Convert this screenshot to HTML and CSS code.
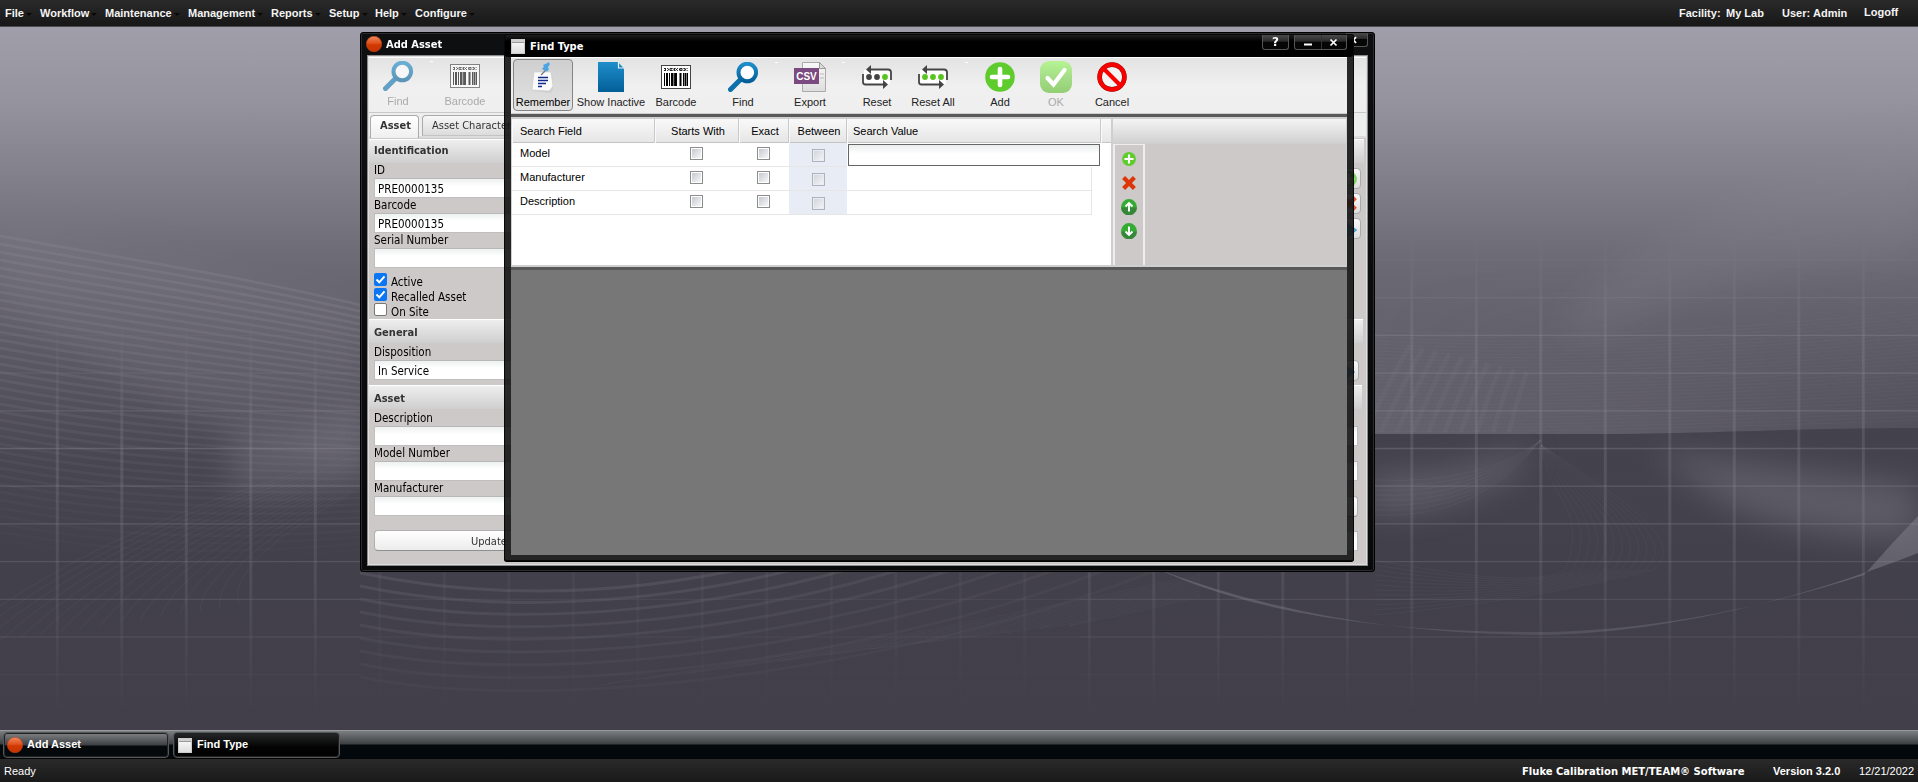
FILE: index.html
```html
<!DOCTYPE html>
<html lang="en">
<head>
<meta charset="utf-8">
<title>MET/TEAM</title>
<link rel="stylesheet" href="styles.css">
</head>
<body>
<svg class="defs" width="0" height="0" aria-hidden="true">
  <defs>
    <linearGradient id="gBlue" x1="0" y1="0" x2="0" y2="1"><stop offset="0" stop-color="#1f8ecb"/><stop offset="1" stop-color="#035f98"/></linearGradient>
    <linearGradient id="gRed" x1="0" y1="0" x2="0" y2="1"><stop offset="0" stop-color="#ef8a5c"/><stop offset=".45" stop-color="#e0501c"/><stop offset=".55" stop-color="#d23a02"/><stop offset="1" stop-color="#c63300"/></linearGradient>
    <linearGradient id="gOk" x1="0" y1="0" x2="0" y2="1"><stop offset="0" stop-color="#b6f592"/><stop offset=".5" stop-color="#a5dd88"/><stop offset="1" stop-color="#93cf74"/></linearGradient>
    <linearGradient id="gPage" x1="0" y1="0" x2="0" y2="1"><stop offset="0" stop-color="#f8f8f8"/><stop offset="1" stop-color="#dedede"/></linearGradient>
  </defs>
  <symbol id="find" viewBox="0 0 30 30"><path d="M2.500 27.500 13 17" stroke="#0c70ab" stroke-width="5" stroke-linecap="round"/><circle cx="19.300" cy="10.500" r="8.800" fill="#fff" stroke="url(#gBlue)" stroke-width="4"/></symbol>
  <symbol id="barcode" viewBox="0 0 30 24"><rect x=".5" y=".5" width="29" height="23" fill="#fff" stroke="#444"/><path d="M3 3.500h24M3 5.500h24" stroke="#222" stroke-width="1" stroke-dasharray="2 1.200 1 1.500 3 1"/><path d="M4 4.500h22" stroke="#222" stroke-dasharray="1 2 1.500 1"/><path d="M3.500 8v13M8.500 8v13M22.500 8v13M26.500 8v13" stroke="#000"/><path d="M6 8v13M11 8v13M15 8v13M19.500 8v13M24.500 8v13" stroke="#000" stroke-width="2"/><path d="M13.200 8v13" stroke="#000" stroke-width="1.400"/></symbol>
  <symbol id="addc" viewBox="0 0 30 30"><circle cx="15" cy="15" r="14.800" fill="#5fcc2e"/><path d="M15 7v16M7 15h16" stroke="#fff" stroke-width="4.600" stroke-linecap="round"/></symbol>
  <symbol id="reset" viewBox="0 0 30 26"><rect x="2" y="6" width="26" height="14" fill="#fff"/><path d="M7 5.500H26q3 0 3 3V16M1 10v8Q1 20.500 3.500 20.500H22" fill="none" stroke="#454545" stroke-width="1.800"/><path d="M4 5.500 9 1v9zM26 20.500 21 16v9z" fill="#454545"/></symbol>
  <symbol id="xmark" viewBox="0 0 14 14"><path d="M1.600 1.600l10.800 10.800M12.400 1.600l-10.800 10.800" stroke="#de3506" stroke-width="4.200"/></symbol>
  <symbol id="disc" viewBox="0 0 16 16"><circle cx="8" cy="8" r="7.900" fill="#35ab34"/><path d="M.1 8.500a7.900 7.900 0 0 0 15.800 0z" fill="#36873a"/></symbol>
  <symbol id="ball" viewBox="0 0 16 16"><circle cx="8" cy="8" r="7.700" fill="url(#gRed)" stroke="#b8441a" stroke-width=".6"/></symbol>
  <symbol id="goto" viewBox="0 0 16 16"><path d="M1 1v10h6" fill="none" stroke="#333" stroke-width="1.500"/><path d="M7 3.500v3H3.500v5H7v3.500L14.500 9z" fill="#35a7d8" stroke="#2482ad"/></symbol>
</svg>

<header class="menubar">
  <nav class="menus">
    <span class="menu">File</span><span class="menu">Workflow</span><span class="menu">Maintenance</span><span class="menu">Management</span><span class="menu">Reports</span><span class="menu">Setup</span><span class="menu">Help</span><span class="menu">Configure</span>
  </nav>
  <div class="session"><span class="facility">Facility:</span><span class="lab">My Lab</span><span class="user">User:</span><span class="admin">Admin</span><span class="logoff">Logoff</span></div>
</header>

<main class="desktop">
  <svg class="wallpaper" width="1918" height="703" viewBox="0 27 1918 703">
    <defs>
      <linearGradient id="sky" x1="0" y1="0" x2="0" y2="1">
        <stop offset="0" stop-color="#a09ea8"/><stop offset=".1" stop-color="#96949e"/><stop offset=".2" stop-color="#84828c"/><stop offset=".32" stop-color="#6e6c77"/><stop offset=".46" stop-color="#5b5964"/><stop offset=".62" stop-color="#484650"/><stop offset=".75" stop-color="#42404a"/><stop offset="1" stop-color="#423f4a"/>
      </linearGradient>
      <linearGradient id="gridFade" x1="0" y1="0" x2="0" y2="1"><stop offset=".28" stop-color="#000"/><stop offset=".45" stop-color="#fff"/><stop offset=".72" stop-color="#ddd"/><stop offset=".98" stop-color="#000"/></linearGradient>
      <linearGradient id="gridFadeLeft" x1="0" y1="0" x2="0" y2="1"><stop offset=".4" stop-color="#000"/><stop offset=".6" stop-color="#fff"/><stop offset=".8" stop-color="#aaa"/><stop offset=".98" stop-color="#000"/></linearGradient>
      <mask id="mGrid" maskUnits="userSpaceOnUse" x="0" y="27" width="1918" height="703"><rect x="1080" y="27" width="838" height="703" fill="url(#gridFade)"/><rect y="27" width="360" height="703" fill="url(#gridFadeLeft)"/><rect x="360" y="27" width="720" height="703" fill="url(#gridFadeLeft)" opacity=".45"/></mask>
      <linearGradient id="ridge" x1="0" y1="0" x2="0" y2="1"><stop offset="0" stop-color="#7b7983" stop-opacity="0"/><stop offset="1" stop-color="#7b7983" stop-opacity=".5"/></linearGradient>
      <linearGradient id="ridgeRight" x1="0" y1="0" x2="1" y2="0"><stop offset="0" stop-color="#fff"/><stop offset=".5" stop-color="#bbb"/><stop offset="1" stop-color="#333"/></linearGradient>
      <mask id="mRidge" maskUnits="userSpaceOnUse" x="1370" y="220" width="548" height="240"><rect x="1370" y="220" width="548" height="240" fill="url(#ridgeRight)"/></mask>
      <linearGradient id="dark" x1="0" y1="0" x2="0" y2="1"><stop offset="0" stop-color="#403e48" stop-opacity=".75"/><stop offset="1" stop-color="#403e48" stop-opacity="0"/></linearGradient>
      <linearGradient id="flare" gradientUnits="userSpaceOnUse" x1="1160" y1="0" x2="1918" y2="0"><stop offset="0" stop-color="#85838d" stop-opacity=".45"/><stop offset=".5" stop-color="#85838d" stop-opacity=".25"/><stop offset="1" stop-color="#85838d" stop-opacity=".5"/></linearGradient>
      <filter id="soft" x="-30%" y="-60%" width="160%" height="220%"><feGaussianBlur stdDeviation="16"/></filter>
    </defs>
    <rect y="27" width="1918" height="703" fill="url(#sky)"/>
    <path d="M0 225C120 245 240 270 365 305V480C240 440 110 380 0 300z" fill="#83818b" opacity=".22" filter="url(#soft)"/>
    <path d="M230 430Q300 445 370 400V470Q300 500 230 490z" fill="#85838d" opacity=".35" filter="url(#soft)"/>
    <path d="M1370 434H1600C1700 434 1800 428 1918 428V260H1370z" fill="url(#ridge)" mask="url(#mRidge)"/>
    <path d="M1560 330Q1600 240 1918 125V260Q1700 270 1600 340z" fill="#8c8a94" opacity=".18" filter="url(#soft)"/>
    <path d="M1370 434H1600C1700 434 1800 428 1918 428V560H1370z" fill="url(#dark)"/>
    <path d="M1370 475Q1450 480 1530 445L1520 470Q1440 515 1370 510z" fill="#7d7b85" opacity=".5" filter="url(#soft)"/>
    <path d="M1650 450Q1800 470 1918 485V540Q1800 540 1720 500z" fill="#83818b" opacity=".4" filter="url(#soft)"/>
    <path d="M1160 570Q1300 634 1550 632Q1700 628 1864 575Q1890 545 1918 516V553C1800 600 1660 634 1540 635Q1330 634 1160 570z" fill="url(#flare)"/>
    <g id="waves" fill="none" stroke="#8b8993"></g>
    <g id="lattice" stroke="#8f8d97" mask="url(#mGrid)"></g>
  </svg>

  <section class="window asset-window">
    <div class="titlebar"><svg width="16" height="16"><use href="#ball"/></svg><h2>Add Asset</h2></div>
    <div class="asset-content">
      <div class="asset-tools">
        <div class="tool off"><div class="ico"><svg width="30" height="30"><use href="#find"/></svg></div>Find</div>
        <div class="tool off second sep"><div class="ico"><svg width="30" height="24"><use href="#barcode"/></svg></div>Barcode</div>
      </div>
      <div class="tabs"><div class="tab active">Asset</div><div class="tab long">Asset Characteri</div></div>
      <div class="form">
        <h3 class="s1">Identification</h3>
        <div class="body b1">
          <div class="col">
            <label>ID</label><div class="field">PRE0000135</div>
            <label>Barcode</label><div class="field">PRE0000135</div>
            <label>Serial Number</label><div class="field"></div>
            <div class="checks">
              <div class="check"><i class="box on"><svg width="13" height="13"><path d="M2.500 6.500 5.300 9.300 10.500 3.300" fill="none" stroke="#fff" stroke-width="2"/></svg></i>Active</div>
              <div class="check"><i class="box on"><svg width="13" height="13"><path d="M2.500 6.500 5.300 9.300 10.500 3.300" fill="none" stroke="#fff" stroke-width="2"/></svg></i>Recalled Asset</div>
              <div class="check"><i class="box"></i>On Site</div>
            </div>
          </div>
          <div class="minis"><div class="mini"><svg width="16" height="16"><use href="#addc"/></svg></div><div class="mini"><svg width="15" height="15"><use href="#xmark"/></svg></div><div class="mini"><svg width="18" height="18"><use href="#goto"/></svg></div></div>
        </div>
        <h3 class="s2">General</h3>
        <div class="body b2">
          <div class="col"><label>Disposition</label><div class="field">In Service</div></div>
          <div class="minis"><div class="mini"><svg width="18" height="18"><use href="#goto"/></svg></div></div>
        </div>
        <h3 class="s3">Asset</h3>
        <div class="body b3">
          <div class="col">
            <label>Description</label><div class="field"></div>
            <label>Model Number</label><div class="field"></div>
            <label>Manufacturer</label><div class="field"></div>
            <div class="push">Update</div>
          </div>
          <div class="col right"><div class="field"></div><div class="field"></div><div class="push"></div><div class="field"></div></div>
        </div>
      </div>
    </div>
    <div class="ctl back-ctl"><svg width="16" height="15"><path d="M4 4l5 6M9 4l-5 6" stroke="#fff" stroke-width="1.800"/></svg></div>
  </section>

  <section class="window find-window">
    <div class="titlebar"><i class="doc"></i><h2>Find Type</h2></div>
    <div class="find-content">
      <div class="tools">
        <div class="tool pressed"><div class="ico"><svg width="30" height="32" viewBox="0 0 30 32"><path d="M5 11 24 10 25 27 23 31 5 29z" fill="#d0d0d0"/><path d="M6 10 23 10 25 24Q23 27 21 29L4 28z" fill="#fbfbfb" stroke="#c9c9c9" stroke-width=".6"/><path d="M10 15.500H20M10 18.500h10M10 21.500h8M10 24.500h4" stroke="#102a8c" stroke-width="1.400"/><path d="M13 13l5-5" stroke="#777" stroke-width="1.300"/><path d="M15 3 19 1.200 21 0l.8 3-1.800 1.500.8 3L19 9.500 16 8.500 14 6.500l2-1.500z" fill="#4ba4e4"/></svg></div>Remember</div>
        <div class="tool wide"><div class="ico"><svg width="26" height="30"><path d="M0 0h20l6 6.500v23.500H0z" fill="url(#gBlue)"/><path d="M20.500 0v6H26" fill="none" stroke="#e8f2f8" stroke-width="1.200"/></svg></div>Show Inactive</div>
        <div class="tool"><div class="ico"><svg width="30" height="24"><use href="#barcode"/></svg></div>Barcode</div>
        <div class="tool gap"><div class="ico"><svg width="30" height="30"><use href="#find"/></svg></div>Find</div>
        <div class="tool gap sep"><div class="ico"><svg width="32" height="30"><path d="M8.500.5h17l6 6v23h-23z" fill="url(#gPage)" stroke="#aaa"/><path d="M25.500.5v6h6z" fill="#ddd" stroke="#999"/><path d="M26 12h4M26 16h4" stroke="#bbb"/><rect y="6" width="25" height="16" fill="#7b4a80"/><text x="12.500" y="18" class="csv">CSV</text></svg></div>Export</div>
        <div class="tool gap sep"><div class="ico"><svg width="30" height="26"><use href="#reset"/><circle cx="7" cy="13" r="2.900" fill="#444"/><circle cx="15" cy="13" r="2.900" fill="#444"/><circle cx="23" cy="13" r="2.900" fill="#59c41f"/></svg></div>Reset</div>
        <div class="tool all"><div class="ico"><svg width="30" height="26"><use href="#reset"/><g fill="#59c41f"><circle cx="7" cy="13" r="2.900"/><circle cx="15" cy="13" r="2.900"/><circle cx="23" cy="13" r="2.900"/></g></svg></div>Reset All</div>
        <div class="tool add sep"><div class="ico"><svg width="30" height="30"><use href="#addc"/></svg></div>Add</div>
        <div class="tool ok"><div class="ico"><svg width="32" height="32"><rect width="32" height="32" rx="9" fill="url(#gOk)"/><path d="M7.500 17l6 6.500L24.500 9" fill="none" stroke="#fff" stroke-width="4.200" stroke-linecap="round"/></svg></div>OK</div>
        <div class="tool ok2"><div class="ico"><svg width="30" height="30"><circle cx="15" cy="15" r="12.400" fill="#f3f3f3" stroke="#8a0a0a" stroke-width="4.600"/><circle cx="15" cy="15" r="12.500" fill="none" stroke="#f90000" stroke-width="4"/><path d="M6.500 6.500l17 17" stroke="#f90000" stroke-width="4"/></svg></div>Cancel</div>
      </div>
      <div class="criteria">
        <div class="grid">
          <div class="row head"><div>Search Field</div><div>Starts With</div><div>Exact</div><div>Between</div><div>Search Value</div><div></div></div>
          <div class="row"><div>Model</div><div><i class="cb"></i></div><div><i class="cb"></i></div><div class="between"><i class="cb dim"></i></div><div class="value"><div class="entry"></div></div></div>
          <div class="row"><div>Manufacturer</div><div><i class="cb"></i></div><div><i class="cb"></i></div><div class="between"><i class="cb dim"></i></div><div class="value plain"></div></div>
          <div class="row"><div>Description</div><div><i class="cb"></i></div><div><i class="cb"></i></div><div class="between"><i class="cb dim"></i></div><div class="value plain"></div></div>
        </div>
        <aside class="side">
          <div class="side-head"></div>
          <div class="rail"><svg width="14" height="14"><use href="#addc"/></svg><svg width="14" height="14"><use href="#xmark"/></svg><svg width="16" height="16"><use href="#disc"/><path d="M8 12.500V4.500M4.500 7.500 8 4l3.500 3.500" fill="none" stroke="#fff" stroke-width="1.900"/></svg><svg width="16" height="16"><use href="#disc"/><path d="M8 3.500v8M4.500 8.500 8 12l3.500-3.500" fill="none" stroke="#fff" stroke-width="1.900"/></svg></div>
        </aside>
      </div>
      <div class="results"></div>
    </div>
    <div class="controls">
      <div class="ctl help">?</div>
      <div class="ctl pair"><svg width="51" height="14"><path d="M26.500 0v14" stroke="#333"/><path d="M9 9.500h8" stroke="#fff" stroke-width="2"/><path d="M35.500 4.500l6 6M41.500 4.500l-6 6" stroke="#fff" stroke-width="1.700"/></svg></div>
    </div>
  </section>
</main>

<div class="taskbar">
  <div class="task"><svg width="16" height="16"><use href="#ball"/></svg><span>Add Asset</span></div>
  <div class="task current"><i class="doc"></i><span>Find Type</span></div>
</div>
<footer class="status"><span class="ready">Ready</span><span class="product">Fluke Calibration MET/TEAM® Software</span><b class="version">Version 3.2.0</b><span class="date">12/21/2022</span></footer>
<script src="wallpaper.js"></script>
</body>
</html>
```
FILE: styles.css
```css
* { box-sizing: border-box; }
body { margin: 0; width: 1918px; height: 782px; overflow: hidden; display: flex; flex-direction: column; font: 11px "Liberation Sans", Arial, sans-serif; background: #423f4a; }
svg { display: block; flex: none; }
.defs { position: absolute; }
h2, h3 { margin: 0; }

.menubar { height: 27px; flex: none; display: flex; justify-content: space-between; background: linear-gradient(#2a2a2a, #171717); border-bottom: 1px solid #4d4c50; color: #f4f4f4; font-weight: bold; line-height: 26px; }
.menus { display: flex; padding-left: 5px; }
.menu { display: flex; align-items: center; margin-right: 10px; white-space: nowrap; }
.menu::after { content: ""; border: 3px solid transparent; border-top-color: #080808; margin: 3px 0 0 2px; border-bottom: 0; width: 0; }
.menu:nth-child(1) { width: 25px; } .menu:nth-child(2) { width: 55px; } .menu:nth-child(3) { width: 73px; } .menu:nth-child(4) { width: 73px; } .menu:nth-child(5) { width: 48px; } .menu:nth-child(6) { width: 36px; } .menu:nth-child(7) { width: 30px; }
.session { display: flex; line-height: 27px; padding-right: 19px; }
.facility { width: 47px; } .lab { width: 56px; } .user { width: 31px; } .admin { width: 51px; } .logoff { width: 35px; line-height: 25px; }

.desktop { flex: none; height: 703px; position: relative; overflow: hidden; }
.wallpaper { width: 1918px; height: 703px; }

.window { position: absolute; border-radius: 3px; }
.titlebar { display: flex; align-items: center; color: #fff; }
.titlebar h2 { font: bold 11px "DejaVu Sans Condensed", "DejaVu Sans", sans-serif; }
.asset-window { left: 360px; top: 5px; width: 1015px; height: 540px; padding: 0 6px 6px; background: rgba(6, 7, 8, .95); border: 1px solid #000; box-shadow: inset 0 0 0 1px #2c2c2c; }
.asset-window .titlebar { height: 22px; margin-left: -1px; gap: 4px; }
.asset-content { height: 511px; border: 1px solid #8b8b8b; background: #cdc9c8; box-shadow: inset 0 0 0 1px #dedede; padding: 1px 2px; }
.asset-tools { height: 56px; display: flex; background: linear-gradient(#e3e3e3, #f0f0f0 50%, #efefef); border-bottom: 1px solid #c9c9c9; border-top: 1px solid #fff; margin: 0 -1px; }
.tool { width: 54px; height: 52px; display: flex; flex-direction: column; align-items: center; color: #222; line-height: 13px; white-space: nowrap; }
.ico { height: 37px; width: 34px; display: flex; align-items: center; justify-content: center; flex: none; padding-bottom: 1px; }
.off { color: #aaa; margin-left: 2px; }
.off svg { opacity: .62; }
.off.second { margin-left: 13px; }
.tabs { display: flex; height: 25px; background: #eee; border-bottom: 2px solid #ddd; padding: 2px 0 0 1px; gap: 3px; margin: 0 -1px; }
.tab { height: 21px; border: 1px solid #aaa; border-bottom: 1px solid #c4c4c4; border-radius: 4px 4px 0 0; background: linear-gradient(#f7f7f7, #dcdcdc); padding: 0 9px; font: 11px/19px "DejaVu Sans Condensed", "DejaVu Sans", sans-serif; color: #333; white-space: nowrap; }
.long { width: 130px; }
.tab.active { width: 49px; height: 23px; background: linear-gradient(#fff, #efefef); border-bottom: 0; font-weight: bold; }
.form { font: 11.5px "DejaVu Sans Condensed", "DejaVu Sans", sans-serif; padding-top: 1px; }
.form h3 { height: 24px; margin-left: -1px; padding-left: 5px; border-top: 1px solid #fff; background: linear-gradient(#eee, #cfcfcf); font: bold 11px/25px "DejaVu Sans Condensed", "DejaVu Sans", sans-serif; color: #333; }
.form .s1 { width: 995px; line-height: 21px; } .s2 { width: 994px; } .s3 { width: 993px; }
.body { display: flex; padding: 0 4px; }
.b1 { height: 156px; } .b2 { height: 42px; padding-top: 2px; } .b3 { padding-top: 2px; }
.col { width: 820px; }
.col label { display: block; height: 15px; line-height: 15px; }
.field { height: 20px; border: 1px solid #bfbfbf; border-top-color: #b8b8b8; background: linear-gradient(#eef1f1, #fff 40%); padding-left: 3px; line-height: 20px; }
.col.right { width: 164px; padding-top: 15px; display: flex; flex-direction: column; gap: 15px; }
.checks { padding-top: 5px; }
.check { height: 15px; display: flex; gap: 4px; line-height: 19px; }
.box { width: 13px; height: 13px; border-radius: 2px; border: 1px solid #777; background: #fff; }
.box.on { border: 0; background: #0a75f5; }
.push { height: 21px; margin-top: 14px; border: 1px solid #b0b0b0; border-bottom-color: #909090; border-radius: 4px; background: linear-gradient(#fff, #ececec); padding-left: 96px; line-height: 21px; font-size: 11px; color: #333; }
.right .push { margin: 0 0 -1px; padding: 0; width: 164px; }
.minis { width: 167px; display: flex; flex-direction: column; align-items: flex-end; gap: 4px; padding-top: 5px; }
.b2 .minis { padding-top: 15px; width: 165px; }
.mini { width: 24px; height: 21px; border: 1px solid #aaa; border-radius: 4px; background: linear-gradient(#fafafa, #ddd); display: flex; align-items: center; justify-content: center; }
.mini svg { opacity: .8; }

.find-window { left: 504px; top: 7px; width: 850px; height: 528px; padding: 0 7px 6px; background: rgba(20, 20, 20, .91); border-bottom: 1px solid #000; box-shadow: inset 0 0 0 1px #080808; }
.find-window::before { content: ""; position: absolute; inset: 1px 1px auto; height: 22px; background: linear-gradient(#1d1d1d, #000 30%); border-radius: 3px; }
.find-window .titlebar { position: relative; height: 23px; gap: 5px; padding-top: 1px; }
.doc { width: 14px; height: 15px; flex: none; background: linear-gradient(#d0d0d0 2px, #999 2px 3px, #f5f5f5 3px, #ddd); border: 1px solid #ccc; }
.find-content { height: 498px; background: #777; display: flex; flex-direction: column; position: relative; }
.tools { height: 57px; flex: none; display: flex; padding: 1px 2px; background: linear-gradient(#e3e3e3, #f0f0f0 50%, #efefef); border-top: 1px solid #fff; border-bottom: 1px solid #ccc; }
.pressed { width: 60px; background: linear-gradient(#cfcfcf, #e2e2e2); border: 1px solid #858585; border-radius: 4px; color: #000; }
.pressed .ico { height: 36px; }
.wide { width: 76px; } .gap { margin-left: 13px; } .all { width: 58px; } .add { margin-left: 11px; } .ok { margin-left: 2px; color: #aaa; } .ok2 { margin-left: 2px; }
.sep { position: relative; }
.sep::before { content: ""; position: absolute; left: -8px; top: 3px; width: 3px; height: 1px; background: #fff; }
.csv { font: bold 10px "Liberation Sans", sans-serif; fill: #fff; text-anchor: middle; }
.criteria { height: 156px; flex: none; display: flex; border-top: 3px solid #595959; border-bottom: 3px solid #595959; background: #cdc9c8; }
.grid { width: 602px; background: #fff; border: 2px solid #cfcfcf; border-left-width: 1px; }
.row { display: grid; grid-template-columns: 143px 84px 50px 58px 254px 1fr; height: 24px; line-height: 20px; }
.row > div { border-bottom: 1px solid #e6e6e6; padding-left: 8px; }
.row > div:nth-child(2), .row > div:nth-child(3), .row > div:nth-child(4) { padding: 0; display: flex; justify-content: center; }
.row .cb { margin: 4px 2px 0 0; }
.row .between { background: #e8ecf4; }
.row .between .cb { margin: 6px 0 0 1px; }
.row.head { background: linear-gradient(#f9f9f9, #e6e6e6); line-height: 24px; border-bottom: 1px solid #c4c4c4; }
.row.head > div { border: 0; border-right: 1px solid #c9c9c9; box-shadow: inset 1px 0 #fafafa; }
.row.head > div:nth-child(n+2):nth-child(-n+4) { padding-left: 3px; }
.row.head > div:nth-child(5) { padding-left: 6px; }
.row.head > div:last-child { border: 0; }
.row > .value { padding: 0; border: 0; }
.row > .plain { width: 245px; border: solid #e6e6e6; border-width: 0 1px 1px 0; }
.entry { width: 252px; height: 22px; margin: 1px 0 0 1px; border: 1px solid #666; background: linear-gradient(#eaeeee, #fff 45%); }
.cb { width: 13px; height: 13px; border: 1px solid #8c8c8c; background: linear-gradient(135deg, #c4c8cf, #f8f8f8) content-box #fff; padding: 1px; }
.dim { opacity: .6; }
.side { flex: 1; border: solid #cfcfcf; border-width: 2px 1px 2px 0; }
.side-head { height: 25px; background: linear-gradient(#f4f4f4, #cfcfcf); }
.rail { width: 32px; height: 121px; border: solid #eee; border-width: 1px 2px 0; display: flex; flex-direction: column; align-items: center; gap: 8px; padding-top: 7px; }
.rail svg:first-child { margin-bottom: 2px; }
.rail svg:nth-child(2) { margin-bottom: 1px; }

.controls { position: absolute; left: 758px; top: 1px; display: flex; gap: 5px; }
.ctl { height: 15px; border: 1px solid #555; border-top: 0; border-radius: 0 0 3px 3px; background: linear-gradient(#4a4a4a, #2a2a2a 45%, #060606 50%); color: #fff; }
.help { width: 27px; text-align: center; font: bold 12px/14px "DejaVu Sans", sans-serif; }
.pair { width: 53px; }
.back-ctl { position: absolute; right: 6px; top: 0; width: 22px; height: 14px; }

.taskbar { height: 28px; flex: none; display: flex; gap: 4px; padding: 1px 3px; border-top: 1px solid #97999a; background: linear-gradient(#7c7f81, #3c3f41 13px, #03080c 14px, #03080c); }
.task { width: 166px; height: 26px; border: 1px solid #54585b; border-radius: 4px; background: linear-gradient(#808284, #3e4143 12px, #05090c 13px); box-shadow: inset 0 0 0 1px #222; display: flex; align-items: center; gap: 4px; padding-left: 3px; color: #fff; font-weight: bold; }
.task span { padding-bottom: 2px; }
.current { background: linear-gradient(#252627, #030303 60%); gap: 5px; padding-left: 4px; width: 167px; }
.status { flex: 1; display: flex; background: linear-gradient(#2a2a2a, #181818); border-top: 1px solid #050505; border-bottom: 1px solid #444; color: #fff; line-height: 24px; white-space: nowrap; }
.ready { width: 1518px; margin-left: 4px; }
.product { width: 251px; font: bold 10px/25px "DejaVu Sans", sans-serif; }
.version { width: 86px; }
```
FILE: wallpaper.js
```js
// Draws the wallpaper's lattice and its bundles of wave lines.
const NS = "http://www.w3.org/2000/svg";
const lattice = document.getElementById("lattice");
const waves = document.getElementById("waves");

function path(parent, d, width, opacity) {
  const p = document.createElementNS(NS, "path");
  p.setAttribute("d", d);
  p.setAttribute("stroke-width", width);
  p.setAttribute("opacity", opacity);
  parent.appendChild(p);
}

for (let x = 57.3; x < 1918; x += 64.5) path(lattice, `M${x} 27V730`, 3, 0.27);
for (let y = 260; y < 730; y += 37.7) path(lattice, `M0 ${y}H1918`, 1.3, 0.38);

// Left field: long, slightly falling swells.
for (let i = 0; i < 40; i++) {
  const y = 236 + i * 8;
  const o = 0.3 * (1 - i / 41);
  path(waves, `M0 ${y}C120 ${y + 22} 230 ${y + 38 - i * 0.4} 365 ${y + 70 - i * 1.6}`, 2.8, o);
}
// Fan rising towards the windows.
for (let i = 0; i < 16; i++) path(waves, `M${i * 20 - 60} ${650 - i * 3}Q${100 + i * 8} ${520 + i * 3} 365 ${455 + i * 2}`, 0.8, 0.13);
// Swells below the windows, sagging and then climbing to the right.
for (let i = 0; i < 9; i++) path(waves, `M360 ${573 + i * 13}C${480 + i * 10} ${598 + i * 15} ${620 + i * 40} ${600 + i * 8} ${780 + i * 50} 560`, 3, 0.2 - i * 0.018);
for (let i = 0; i < 12; i++) path(waves, `M${600 + i * 45} ${685 - i * 6}Q${900 + i * 10} 640 1200 ${575 + i * 2}`, 0.9, 0.09);
// Right field: fine hatch above the ridge.
for (let i = 0; i < 30; i++) path(waves, `M1375 ${330 + i * 3.5}Q1600 ${345 + i * 3} 1918 ${310 + i * 3.8}`, 1, 0.08);
for (let i = 0; i < 10; i++) path(waves, `M${1365 + i * 16} 432Q${1385 + i * 15} 390 ${1410 + i * 13} ${345 + i * 3}`, 5, 0.1);
// Loops below the ridge.
for (let i = 0; i < 12; i++) path(waves, `M1541 445C${1548 + i * 7} 500 ${1590 + i * 9} ${510 + i * 3} ${1565 + i * 8} 570Q1530 ${590 + i} 1375 ${560 + i * 5}`, 0.8, 0.1);
for (let i = 0; i < 8; i++) path(waves, `M1375 ${480 + i * 5}Q1480 ${485 + i * 5} 1541 440`, 0.8, 0.13);
```
